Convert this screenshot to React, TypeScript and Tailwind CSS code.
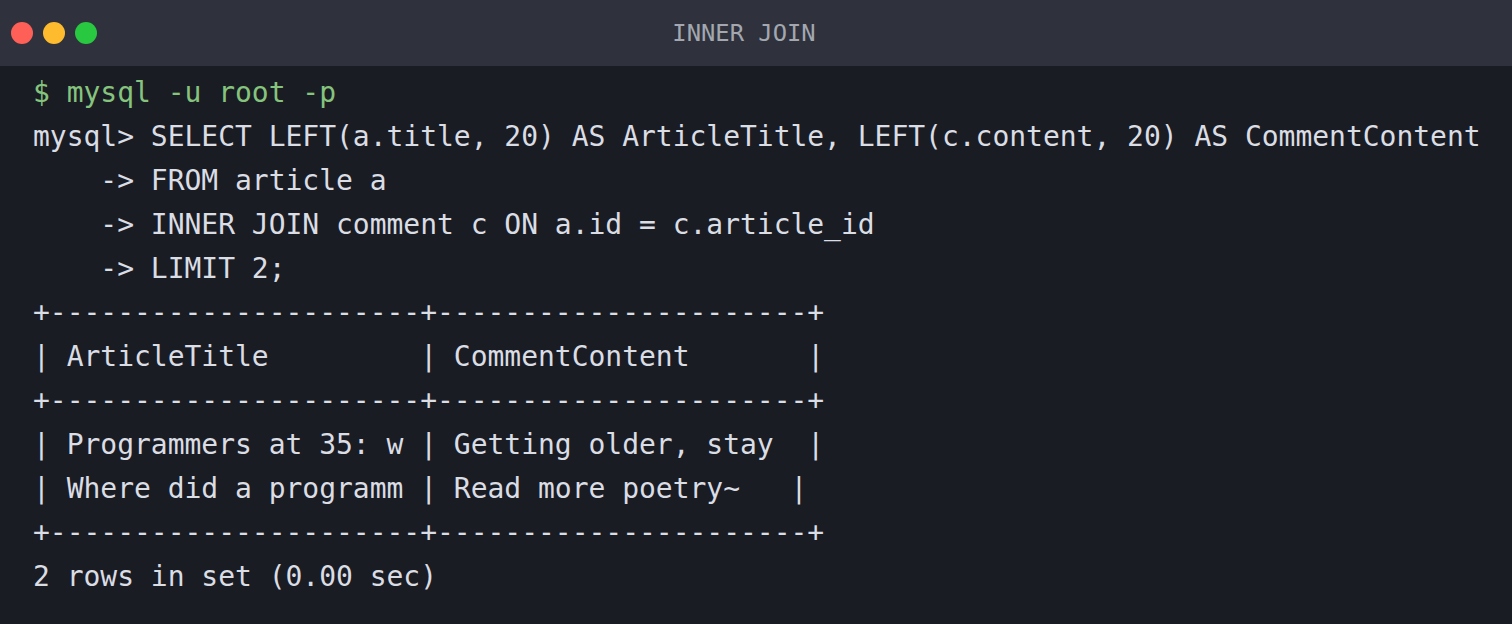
const lines: { text: string; green?: boolean }[] = [
  { text: "$ mysql -u root -p", green: true },
  { text: "mysql> SELECT LEFT(a.title, 20) AS ArticleTitle, LEFT(c.content, 20) AS CommentContent" },
  { text: "    -> FROM article a" },
  { text: "    -> INNER JOIN comment c ON a.id = c.article_id" },
  { text: "    -> LIMIT 2;" },
  { text: "+----------------------+----------------------+" },
  { text: "| ArticleTitle         | CommentContent       |" },
  { text: "+----------------------+----------------------+" },
  { text: "| Programmers at 35: w | Getting older, stay  |" },
  { text: "| Where did a programm | Read more poetry~   |" },
  { text: "+----------------------+----------------------+" },
  { text: "2 rows in set (0.00 sec)" },
];

export default function App() {
  return (
    <div className="w-[1512px] h-[624px] overflow-hidden bg-[#1a1c23] flex flex-col font-['DejaVu_Sans_Mono',monospace]">
      {/* Title bar */}
      <div className="relative h-[66px] shrink-0 bg-[#2f323c] flex items-center justify-center">
        <div className="absolute left-[11px] top-[22px] flex gap-[10px]">
          <span className="w-[22px] h-[22px] rounded-full bg-[#fe5f57]" />
          <span className="w-[22px] h-[22px] rounded-full bg-[#febb2e]" />
          <span className="w-[22px] h-[22px] rounded-full bg-[#28c840]" />
        </div>
        <span className="mr-[24px] mt-[2px] text-[23.8px] text-[#a3a7b0]">INNER JOIN</span>
      </div>

      {/* Terminal body */}
      <div className="pt-[5px] pl-[33px] text-[28px] tracking-[-0.025px] leading-[44px] text-[#dadde3]">
        {lines.map((l, i) => (
          <div key={i} className={`whitespace-pre ${l.green ? "text-[#86c47e]" : ""}`}>
            {l.text}
          </div>
        ))}
      </div>
    </div>
  );
}
